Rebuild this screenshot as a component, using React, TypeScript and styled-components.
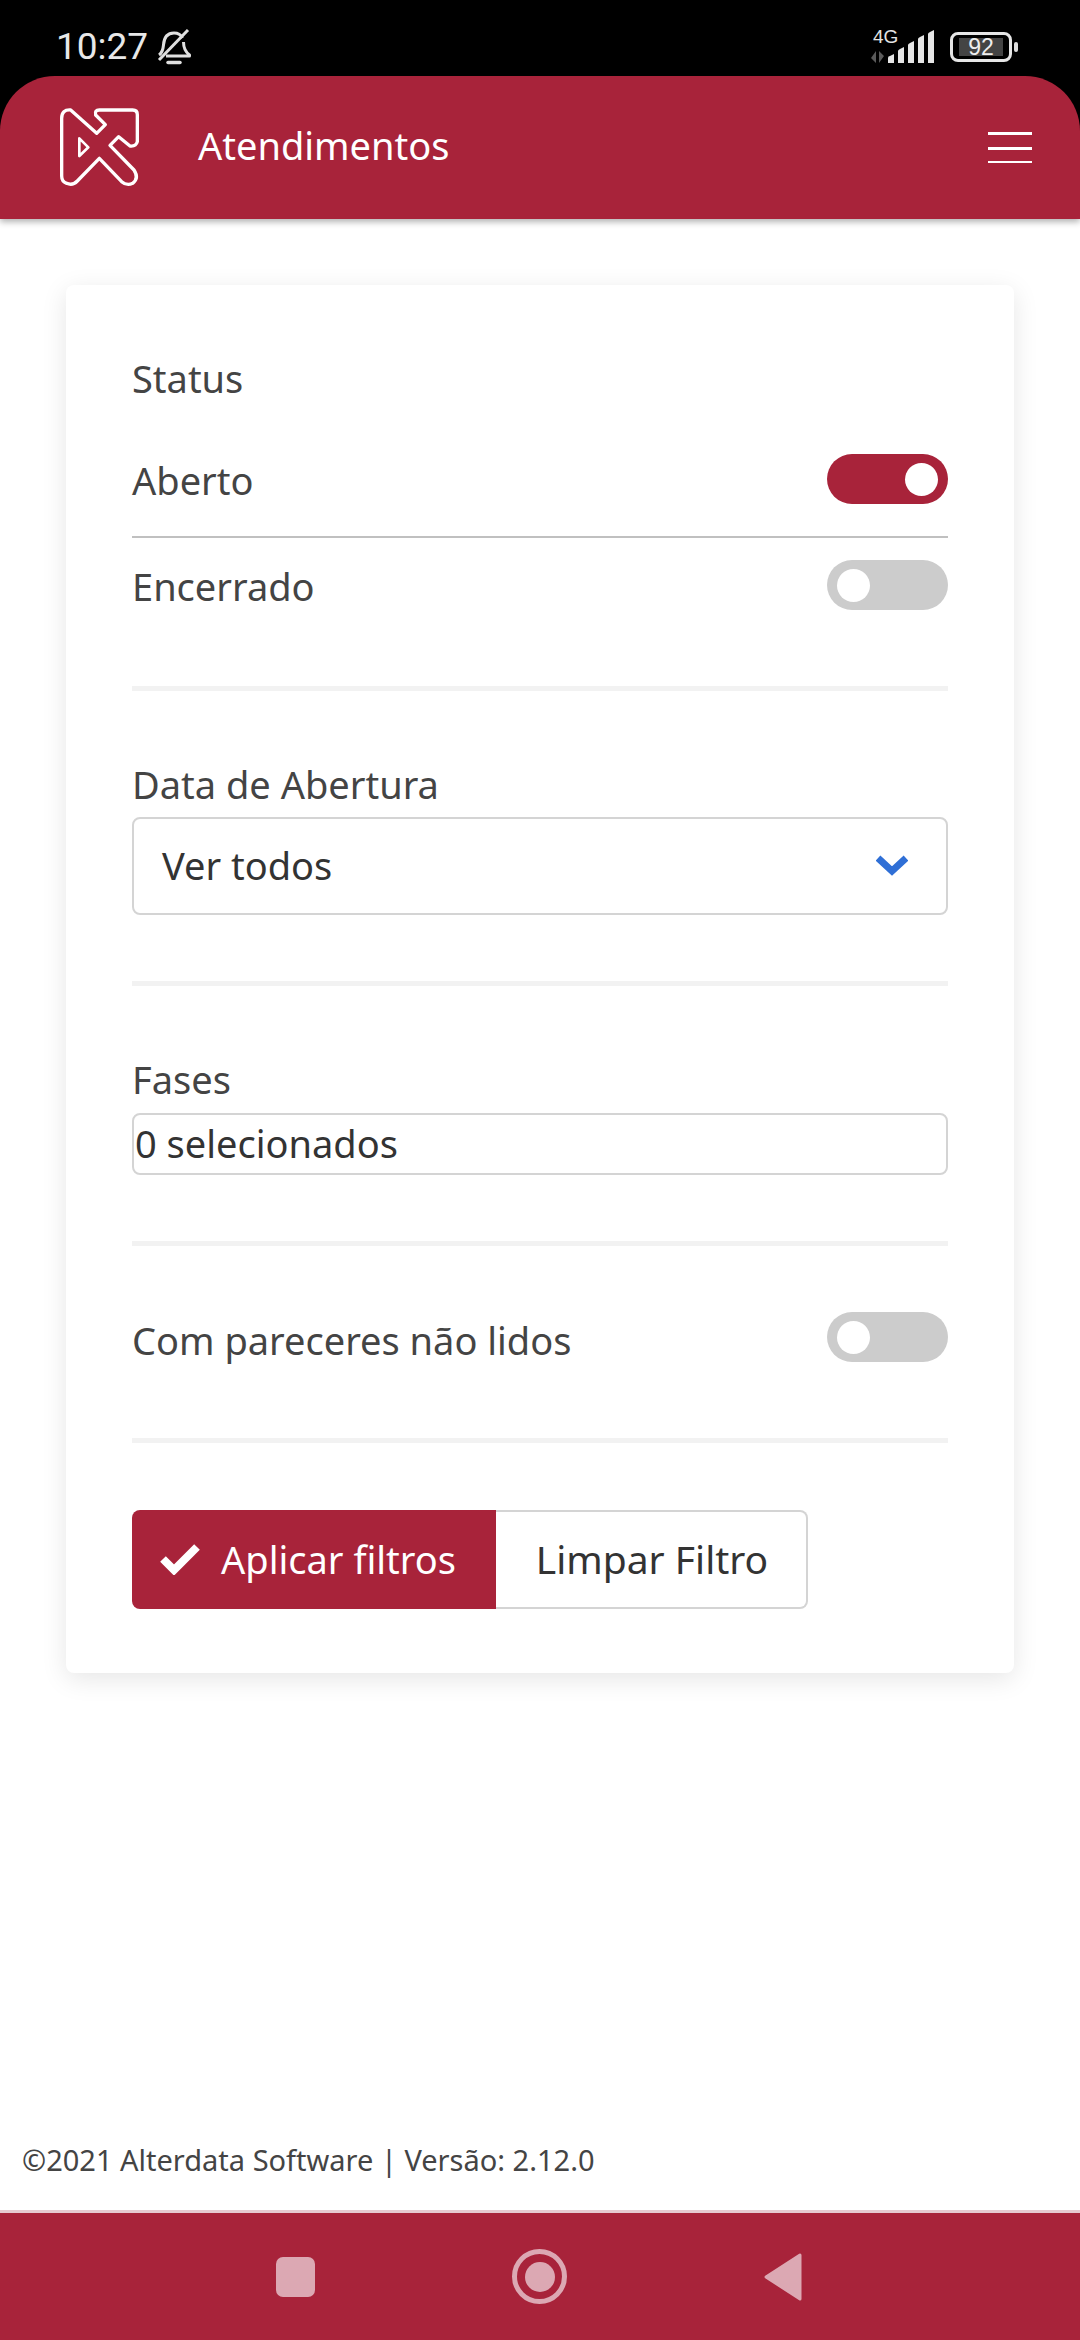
import styled, { createGlobalStyle } from "styled-components";

const RED = "#a8233a";

const GlobalStyle = createGlobalStyle`
  html, body { margin: 0; padding: 0; background: #fff; }
  * { box-sizing: border-box; }
`;

const Screen = styled.div`
  width: 1080px;
  height: 2340px;
  display: flex;
  flex-direction: column;
  background: #fff;
  font-family: "Noto Sans", sans-serif;
`;

const StatusBar = styled.div`
  height: 76px;
  flex: none;
  background: #000;
  display: flex;
  align-items: center;
  justify-content: space-between;
  padding: 18px 62px 0 56px;
  color: #e8e8e8;
`;

const StatusGroup = styled.div`
  display: flex;
  align-items: center;
`;

const Clock = styled.span`
  font-family: Roboto, sans-serif;
  font-size: 37px;
  line-height: 48px;
  margin-right: 8px;
`;

const Network = styled.div`
  position: relative;
  width: 70px;
  height: 34px;
  margin-right: 12px;
`;

const NetworkLabel = styled.span`
  position: absolute;
  left: 5px;
  top: -3px;
  font-family: "Liberation Sans", sans-serif;
  font-size: 19px;
  line-height: 20px;
  color: #e4e4e4;
`;

const Battery = styled.div`
  width: 62px;
  height: 30px;
  border: 3px solid #e6e6e6;
  border-radius: 8px;
  padding: 3px 6px;
  display: flex;
`;

const BatteryFill = styled.div`
  flex: 1;
  background: #444;
  color: #eee;
  font-family: "Liberation Sans", sans-serif;
  font-size: 23px;
  line-height: 18px;
  text-align: center;
`;

const BatteryTip = styled.div`
  width: 4px;
  height: 10px;
  margin-left: 2px;
  border-radius: 2px;
  background: #ddd;
`;

const HeaderWrap = styled.div`
  background: #000;
  flex: none;
`;

const Header = styled.header`
  height: 143px;
  background: ${RED};
  border-radius: 55px 55px 0 0;
  display: flex;
  align-items: center;
  padding: 0 48px 0 50px;
  box-shadow: 0 3px 6px rgba(0, 0, 0, 0.3);
  position: relative;
`;

const Logo = styled.svg`
  width: 100px;
  height: 95px;
  flex: none;
`;

const Title = styled.h1`
  flex: 1;
  margin: 0 0 6px 48px;
  font-weight: 400;
  font-size: 38px;
  line-height: 50px;
  color: #fff;
`;

const MenuButton = styled.div`
  width: 44px;
  height: 31px;
  display: flex;
  flex-direction: column;
  justify-content: space-between;
`;

const MenuLine = styled.span<{ $thin?: boolean }>`
  display: block;
  height: ${(p) => (p.$thin ? 2 : 3)}px;
  background: #fff;
`;

const Main = styled.main`
  flex: 1;
  padding: 66px 66px 0;
`;

const Card = styled.section`
  height: 1388px;
  background: #fff;
  border-radius: 8px;
  box-shadow: 0 6px 26px rgba(0, 0, 0, 0.1);
  padding: 66px;
`;

const Caption = styled.div<{ $top?: number; $bottom?: number }>`
  font-size: 38px;
  line-height: 55px;
  padding-bottom: 3px;
  color: #444;
  margin: ${(p) => p.$top ?? 0}px 0 ${(p) => p.$bottom ?? 0}px;
`;

const ToggleRow = styled.div<{ $height: number; $line?: boolean; $top?: number }>`
  display: flex;
  align-items: center;
  justify-content: space-between;
  height: ${(p) => p.$height}px;
  margin-top: ${(p) => p.$top ?? 0}px;
  ${(p) => p.$line && "padding-top: 13px; border-bottom: 2px solid #c0c0c0;"}
`;

const Toggle = styled.div<{ $on?: boolean }>`
  width: 121px;
  height: 50px;
  border-radius: 25px;
  padding: 0 10px;
  display: flex;
  align-items: center;
  justify-content: ${(p) => (p.$on ? "flex-end" : "flex-start")};
  background: ${(p) => (p.$on ? RED : "#cccccc")};
`;

const Knob = styled.span`
  width: 33px;
  height: 33px;
  border-radius: 50%;
  background: #fff;
`;

const Divider = styled.hr<{ $top: number }>`
  height: 5px;
  margin: ${(p) => p.$top}px 0 0;
  border: 0;
  background: #f2f2f2;
`;

const Select = styled.div`
  height: 98px;
  border: 2px solid #d4d4d4;
  border-radius: 8px;
  padding: 0 38px 3px 28px;
  display: flex;
  align-items: center;
  justify-content: space-between;
  font-size: 38px;
  color: #333;
`;

const MultiSelect = styled.div`
  height: 62px;
  border: 2px solid #d4d4d4;
  border-radius: 8px;
  padding: 0 0 2px 1px;
  display: flex;
  align-items: center;
  font-size: 38px;
  color: #333;
`;

const ButtonGroup = styled.div`
  display: flex;
  width: 676px;
  height: 99px;
  margin-top: 67px;
`;

const ApplyButton = styled.div`
  width: 364px;
  background: ${RED};
  color: #fff;
  border-radius: 8px 0 0 8px;
  display: flex;
  align-items: center;
  gap: 21px;
  padding: 0 0 2px 28px;
  font-size: 38px;
`;

const ClearButton = styled.div`
  flex: 1;
  border: 2px solid #d4d4d4;
  border-left: 0;
  border-radius: 0 8px 8px 0;
  color: #333;
  display: flex;
  align-items: center;
  justify-content: center;
  padding: 0 0 2px 2px;
  font-size: 39px;
`;

const Footer = styled.footer`
  height: 100px;
  flex: none;
  padding: 27px 0 0 22px;
  font-size: 29px;
  line-height: 40px;
  color: #444;
  border-bottom: 3px solid #e6c9cf;
`;

const NavBar = styled.nav`
  height: 127px;
  flex: none;
  background: ${RED};
  display: flex;
  align-items: center;
  padding: 0 0 0 276px;
`;

const NavSquare = styled.span`
  width: 39px;
  height: 40px;
  border-radius: 7px;
  background: #dca8b3;
`;

const NavCircle = styled.span`
  width: 55px;
  height: 55px;
  margin-left: 197px;
  border-radius: 50%;
  border: 5px solid #dca8b3;
  display: flex;
  align-items: center;
  justify-content: center;
`;

const NavDot = styled.span`
  width: 30px;
  height: 30px;
  border-radius: 50%;
  background: #dca8b3;
`;

const NavBack = styled.svg`
  width: 40px;
  height: 48px;
  margin-left: 196px;
`;

export default function App() {
  return (
    <>
      <GlobalStyle />
      <Screen>
        <StatusBar>
          <StatusGroup>
            <Clock>10:27</Clock>
            <svg width="36" height="37" viewBox="0 0 36 37" fill="none" stroke="#e0e0e0" strokeWidth="3">
              <path d="M3 26c3-2 4-5 4.500-10C8 8 12 4 18 4c4 0 7 2 8.500 5M27.500 13c0 6 2 10 6 13v1H10" strokeLinejoin="round" />
              <path d="M3 31 32 1" />
              <path d="M12 33.500h12" strokeWidth="3.500" strokeLinecap="round" />
            </svg>
          </StatusGroup>
          <StatusGroup>
            <Network>
              <NetworkLabel>4G</NetworkLabel>
              <svg width="70" height="34" viewBox="0 0 70 34">
                <path d="M8 21v12l-5-5zM11 33V21l5 5z" fill="#5a5a5a" />
                <path d="M20 33v-5q0-2 2-2l4-2v9zM30 33V21q0-1 2-2l4-2v16zM40 33V15q0-1 2-2l4-2v22zM50 33V9q0-1 2-2l4-2v28zM60 33V4q0-1 2-2l4-2v33z" fill="#e6e6e6" />
              </svg>
            </Network>
            <Battery>
              <BatteryFill>92</BatteryFill>
            </Battery>
            <BatteryTip />
          </StatusGroup>
        </StatusBar>

        <HeaderWrap>
          <Header>
            <Logo viewBox="0 0 300 285" fill="none" stroke="#fff" strokeWidth="10" strokeLinejoin="round">
              <path d="M35 55Q35 28 62 30L140 100 166 74 137 45Q133 30 148 30L248 30Q262 30 262 44L262 125Q258 140 240 138L206 110 180 136 252 210Q268 235 248 250 230 258 215 245L148 175 82 243Q68 258 50 250 35 245 35 228Z" />
              <path d="M88 115 115 142 88 168Z" strokeWidth="8" />
            </Logo>
            <Title>Atendimentos</Title>
            <MenuButton>
              <MenuLine />
              <MenuLine />
              <MenuLine $thin />
            </MenuButton>
          </Header>
        </HeaderWrap>

        <Main>
          <Card>
            <Caption>Status</Caption>
            <ToggleRow $height={129} $line>
              <Caption $top={6}>Aberto</Caption>
              <Toggle $on>
                <Knob />
              </Toggle>
            </ToggleRow>
            <ToggleRow $height={94}>
              <Caption $top={6}>Encerrado</Caption>
              <Toggle>
                <Knob />
              </Toggle>
            </ToggleRow>
            <Divider $top={54} />

            <Caption $top={66} $bottom={2}>Data de Abertura</Caption>
            <Select>
              Ver todos
              <svg width="32" height="22" viewBox="0 0 32 22" fill="none" stroke="#2f6fd6" strokeWidth="7">
                <path d="M2 4l14 13L30 4" />
              </svg>
            </Select>
            <Divider $top={66} />

            <Caption $top={66} $bottom={3}>Fases</Caption>
            <MultiSelect>0 selecionados</MultiSelect>
            <Divider $top={66} />

            <ToggleRow $height={66} $top={58}>
              <Caption $top={9}>Com pareceres não lidos</Caption>
              <Toggle>
                <Knob />
              </Toggle>
            </ToggleRow>
            <Divider $top={68} />

            <ButtonGroup>
              <ApplyButton>
                <svg width="40" height="32" viewBox="0 0 40 32" fill="none" stroke="#fff" strokeWidth="8">
                  <path d="M3 16l11 11L37 4" />
                </svg>
                Aplicar filtros
              </ApplyButton>
              <ClearButton>Limpar Filtro</ClearButton>
            </ButtonGroup>
          </Card>
        </Main>

        <Footer>©2021 Alterdata Software | Versão: 2.12.0</Footer>
        <NavBar>
          <NavSquare />
          <NavCircle>
            <NavDot />
          </NavCircle>
          <NavBack viewBox="0 0 40 48">
            <path d="M37 2v44L3 24z" fill="#dca8b3" stroke="#dca8b3" strokeWidth="3" strokeLinejoin="round" />
          </NavBack>
        </NavBar>
      </Screen>
    </>
  );
}
